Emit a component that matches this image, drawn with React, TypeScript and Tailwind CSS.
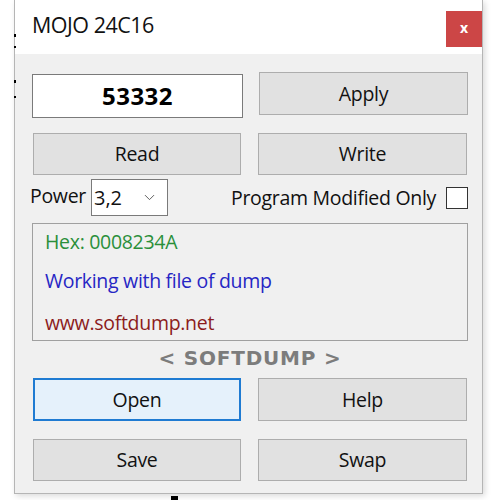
import { ChevronDown } from "lucide-react";

const ui = "font-['Open_Sans','Noto_Sans',sans-serif]";

function WinButton({ label, className = "", focused = false }: { label: string; className?: string; focused?: boolean }) {
  return (
    <button
      className={
        "flex items-center justify-center text-[19.5px] leading-[24px] tracking-[-0.3px] text-[#111] " +
        (focused ? "border-2 border-[#1f7bd2] bg-[#e5f1fb] " : "border border-[#adadad] bg-[#e1e1e1] ") +
        className
      }
    >
      {label}
    </button>
  );
}

export default function App() {
  return (
    <div className={"relative w-[500px] h-[500px] bg-white overflow-hidden " + ui}>
      {/* stray marks from the desktop behind the window */}
      <div className="absolute left-[14px] top-[34px] w-[2px] h-[3px] bg-black" />
      <div className="absolute left-[14px] top-[46px] w-[2px] h-[2px] bg-black" />
      <div className="absolute left-[14px] top-[80px] w-[2px] h-[3px] bg-black" />
      <div className="absolute left-[14px] top-[96px] w-[2px] h-[2px] bg-black" />
      <div className="absolute left-[171px] top-[496px] w-[7px] h-[4px] bg-black" />

      <div className="ml-[14px] w-[469px] h-[494px] border border-t-0 border-[#b5b5b5] shadow-[2px_2px_6px_rgba(0,0,0,0.15)] flex flex-col">
        <div className="h-[54px] bg-white flex items-start justify-between">
          <span className="mt-[11px] ml-[17px] text-[21.5px] leading-[28px] tracking-[-0.5px] text-[#111]">MOJO 24C16</span>
          <div className="mt-[11px] w-[36px] h-[36px] bg-[#cc4646] flex items-center justify-center">
            <span className="text-white text-[14px] font-bold leading-none -mt-[2px]">x</span>
          </div>
        </div>

        <div className="flex-1 bg-[#f0f0f0] pl-[17px] flex flex-col">
          <div className="mt-[18px] flex items-start">
            <div className="mt-[2px] w-[211px] h-[44px] bg-white border border-[#7a7a7a] flex items-center justify-center">
              <span className="text-[24px] leading-[30px] font-bold text-black tracking-[0.5px]">53332</span>
            </div>
            <WinButton label="Apply" className="ml-[16px] w-[209px] h-[43px]" />
          </div>

          <div className="mt-[15px] flex">
            <WinButton label="Read" className="ml-[1px] w-[208px] h-[42px]" />
            <WinButton label="Write" className="ml-[17px] w-[209px] h-[42px]" />
          </div>

          <div className="mt-[4px] h-[37px] flex items-center">
            <span className="-ml-[2px] w-[61px] text-[19.5px] leading-[24px] tracking-[-0.3px] text-[#111] -mt-[3px]">Power</span>
            <div className="w-[77px] h-[37px] bg-white border border-[#7a7a7a] flex items-center justify-between pl-[2px] pr-[9px]">
              <span className="text-[20px] leading-[24px] text-[#111]">3,2</span>
              <ChevronDown className="w-[17px] h-[17px] text-[#444]" strokeWidth={1.2} />
            </div>
            <span className="ml-auto text-[19.5px] leading-[24px] tracking-[-0.3px] text-[#111]">Program Modified Only</span>
            <div className="ml-[10px] mr-[14px] w-[22px] h-[22px] bg-white border border-[#333]" />
          </div>

          <div className="mt-[7px] w-[436px] h-[118px] border border-[#a0a0a0] flex flex-col pl-[12px] text-[19.5px] tracking-[-0.3px]">
            <span className="mt-[6px] leading-[24px] text-[#2a8f3a]">Hex: 0008234A</span>
            <span className="mt-[15px] leading-[24px] text-[#2626c4]">Working with file of dump</span>
            <span className="mt-[18px] leading-[24px] text-[#8c1c1c]">www.softdump.net</span>
          </div>

          <div className="mt-[5px] w-[436px] flex justify-center">
            <span className="font-['DejaVu_Sans',sans-serif] font-bold text-[20px] tracking-[0.8px] text-[#7c7c7c] leading-[24px]">&lt; SOFTDUMP &gt;</span>
          </div>

          <div className="mt-[8px] flex">
            <WinButton label="Open" focused className="ml-[1px] w-[208px] h-[43px]" />
            <WinButton label="Help" className="ml-[17px] w-[209px] h-[43px]" />
          </div>

          <div className="mt-[18px] flex">
            <WinButton label="Save" className="ml-[1px] w-[208px] h-[42px]" />
            <WinButton label="Swap" className="ml-[17px] w-[209px] h-[42px]" />
          </div>
        </div>
      </div>
    </div>
  );
}
